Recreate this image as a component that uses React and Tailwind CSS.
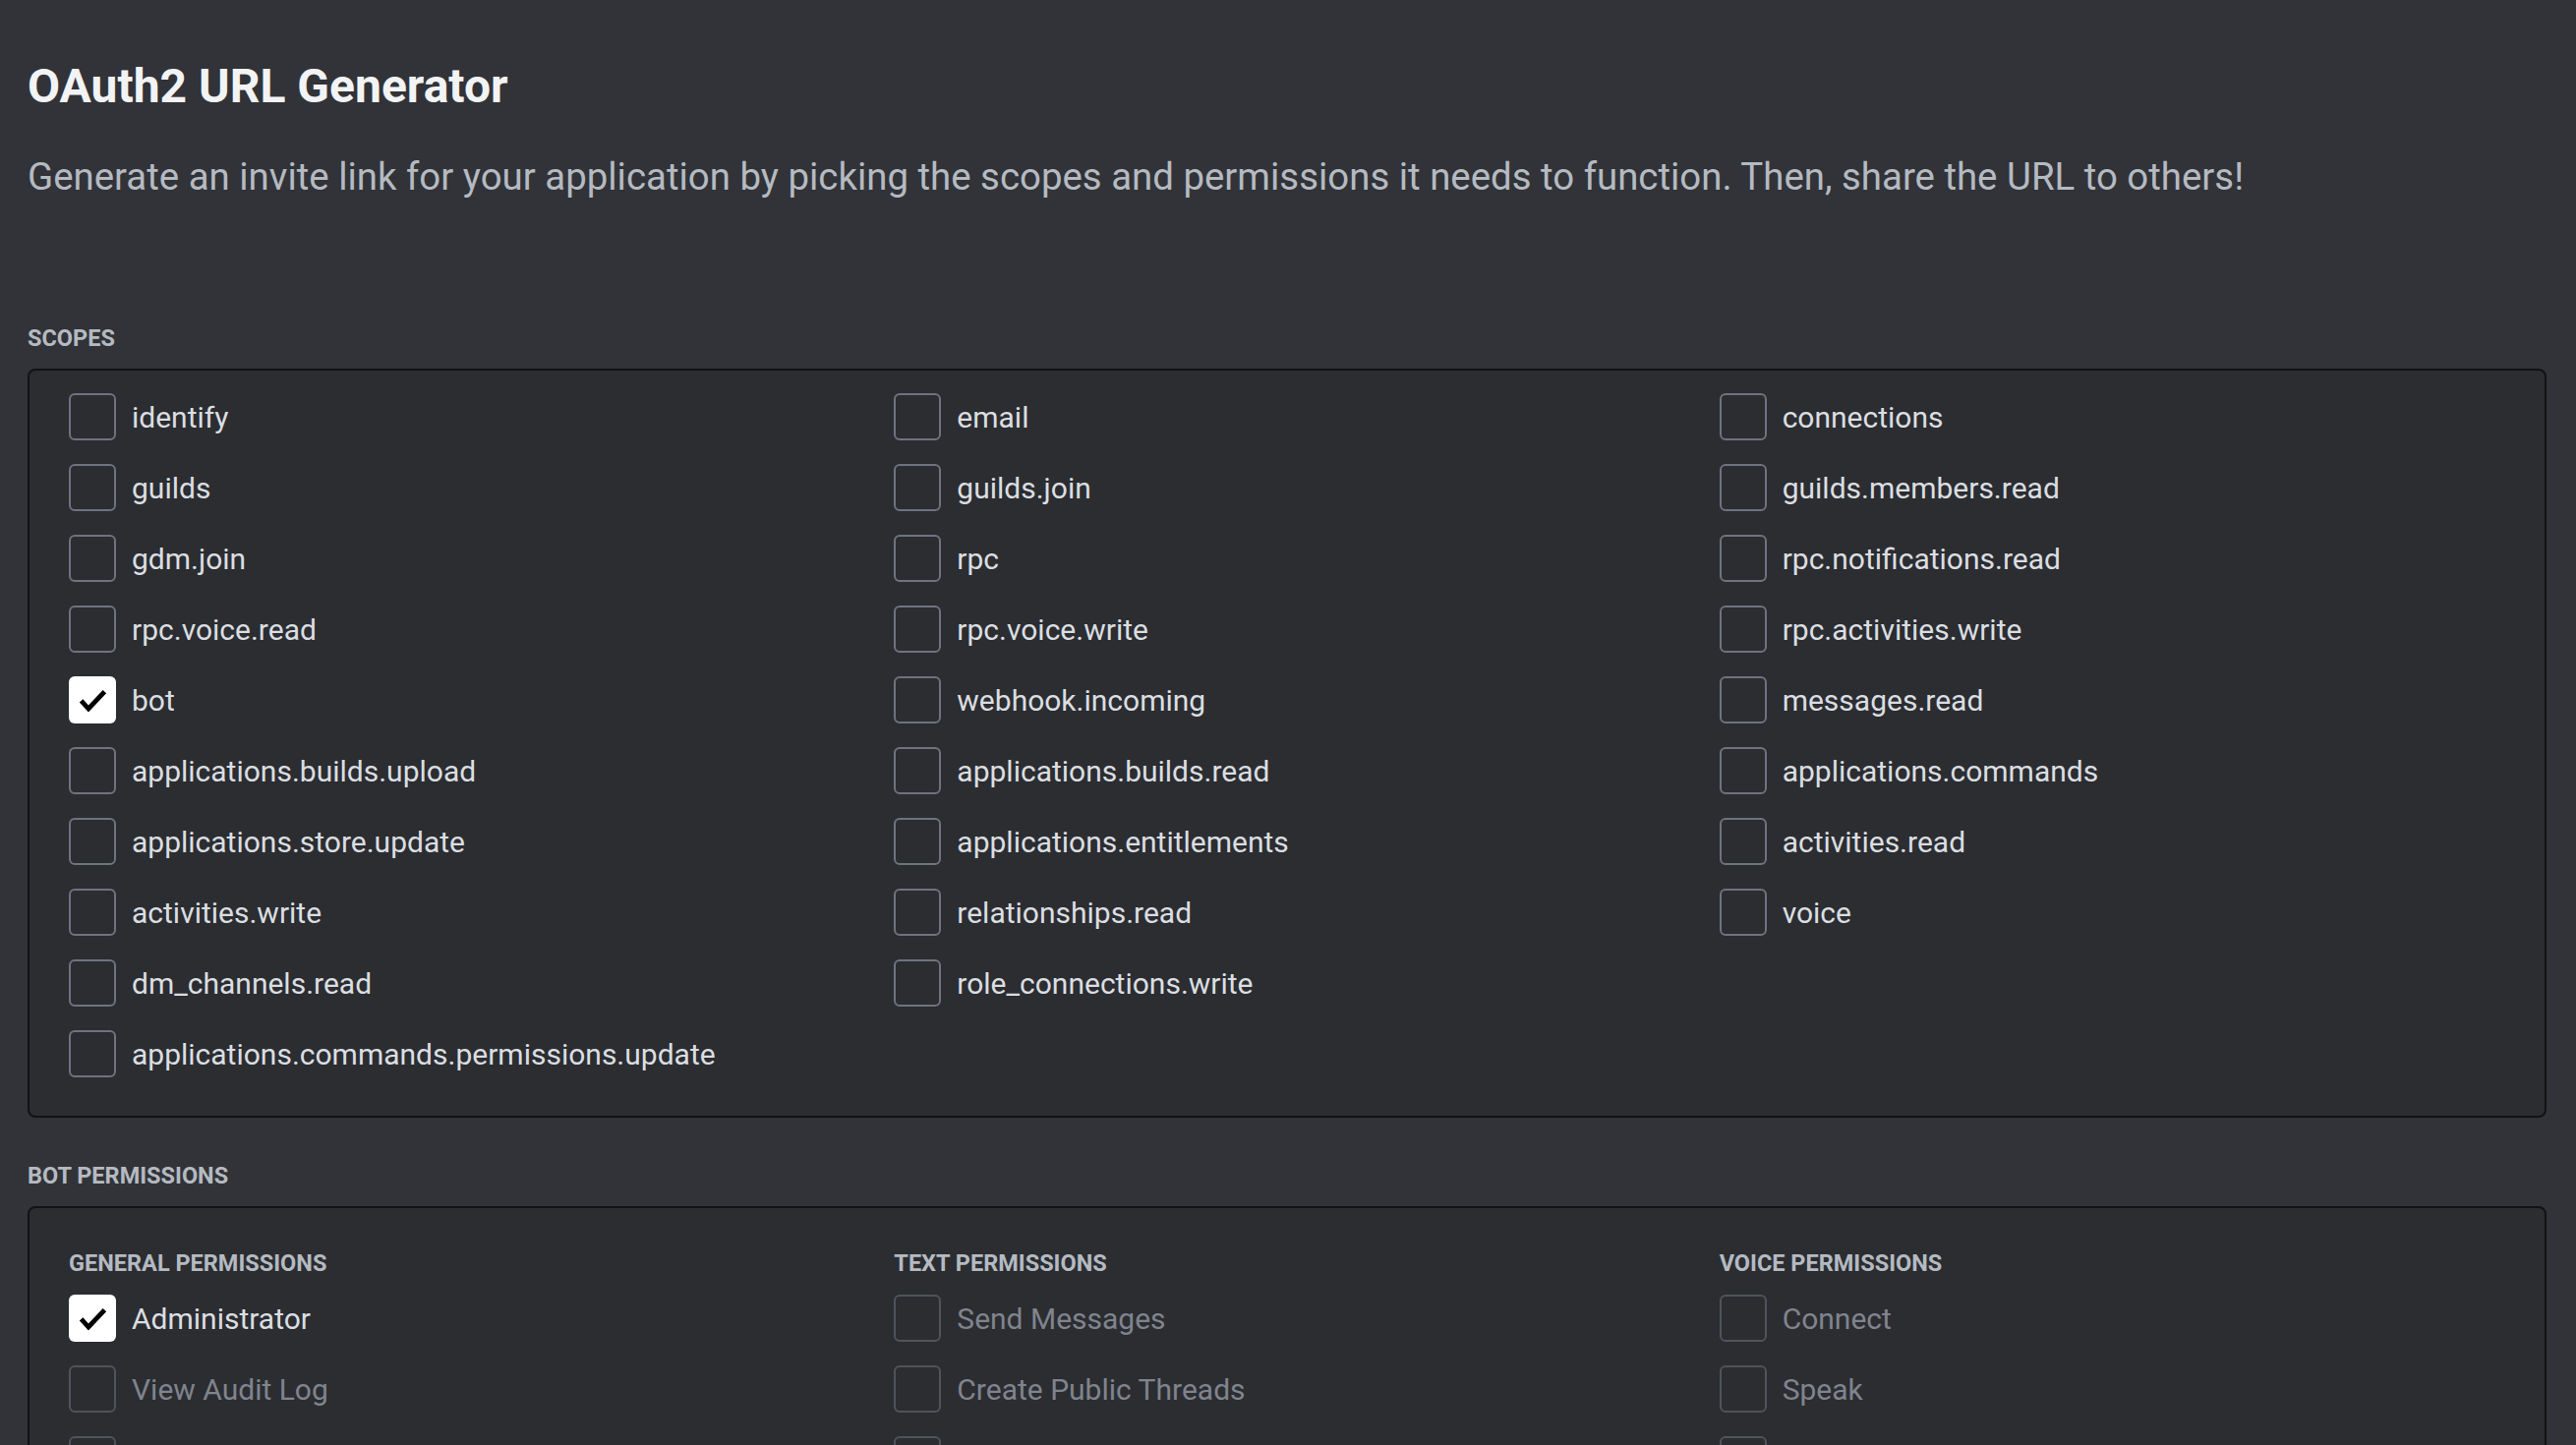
import React from 'react';

const scopes = [
  'identify', 'email', 'connections',
  'guilds', 'guilds.join', 'guilds.members.read',
  'gdm.join', 'rpc', 'rpc.notifications.read',
  'rpc.voice.read', 'rpc.voice.write', 'rpc.activities.write',
  'bot', 'webhook.incoming', 'messages.read',
  'applications.builds.upload', 'applications.builds.read', 'applications.commands',
  'applications.store.update', 'applications.entitlements', 'activities.read',
  'activities.write', 'relationships.read', 'voice',
  'dm_channels.read', 'role_connections.write', null,
  'applications.commands.permissions.update',
];

const permissionGroups = [
  {
    title: 'General Permissions',
    items: ['Administrator', 'View Audit Log', 'Manage Server', 'Manage Roles', 'Manage Channels', 'Kick Members'],
  },
  {
    title: 'Text Permissions',
    items: ['Send Messages', 'Create Public Threads', 'Create Private Threads', 'Send Messages in Threads', 'Send TTS Messages', 'Manage Messages'],
  },
  {
    title: 'Voice Permissions',
    items: ['Connect', 'Speak', 'Video', 'Use Activities', 'Use Soundboard', 'Mute Members'],
  },
];

const Checkbox = ({ checked, disabled }) => {
  if (checked) {
    return (
      <div className="w-12 h-12 shrink-0 rounded-[6px] bg-white flex items-center justify-center">
        <svg width="48" height="48" viewBox="0 0 24 24" fill="none">
          <path d="M6.3 12.4 L10 16.5 L18.2 7.8" stroke="#000" strokeWidth="2.4" strokeLinejoin="miter" />
        </svg>
      </div>
    );
  }
  return (
    <div className={`w-12 h-12 shrink-0 rounded-[6px] border-2 ${disabled ? 'border-[#4e535c]' : 'border-[#6d7380]'}`} />
  );
};

const Option = ({ label, checked, disabled }) => (
  <div className="flex items-center gap-4 h-12">
    <Checkbox checked={checked} disabled={disabled} />
    <span className={`text-[30px] leading-[48px] pt-[2px] whitespace-nowrap ${disabled ? 'text-[#80848e]' : 'text-[#dbdee1]'}`}>{label}</span>
  </div>
);

const SectionLabel = ({ children }) => (
  <h2 className="text-[23.5px] leading-8 font-bold uppercase text-[#b5bac1] mb-[15px]">{children}</h2>
);

export default function App() {
  return (
    <div className="h-[1470px] overflow-hidden bg-[#313338] font-[Roboto,sans-serif] pl-[28px] pr-[30px] pt-[60px]">
      {/* Header */}
      <h1 className="text-[48px] leading-[56px] font-bold text-[#f2f3f5]">OAuth2 URL Generator</h1>
      <p className="mt-[40px] text-[38.4px] leading-[48px] text-[#b5bac1] whitespace-nowrap">
        Generate an invite link for your application by picking the scopes and permissions it needs to function. Then, share the URL to others!
      </p>

      {/* Scopes */}
      <div className="mt-[124px]">
        <SectionLabel>Scopes</SectionLabel>
        <div className="bg-[#2b2d31] border-2 border-[#111214] rounded-[8px] pl-[40px] pt-[23px] pb-[39px]">
          <div className="grid grid-cols-3 gap-y-6">
            {scopes.map((s, i) =>
              s ? <Option key={i} label={s} checked={s === 'bot'} /> : <div key={i} />
            )}
          </div>
        </div>
      </div>

      {/* Bot permissions */}
      <div className="mt-[43px]">
        <SectionLabel>Bot Permissions</SectionLabel>
        <div className="bg-[#2b2d31] border-2 border-[#111214] rounded-[8px] pl-[40px] pt-[40px] pb-[39px]">
          <div className="grid grid-cols-3">
            {permissionGroups.map(group => (
              <div key={group.title} className="flex flex-col">
                <h3 className="text-[23.5px] leading-8 font-bold uppercase text-[#b5bac1] mb-4">{group.title}</h3>
                <div className="flex flex-col gap-6">
                  {group.items.map(item => (
                    <Option
                      key={item}
                      label={item}
                      checked={item === 'Administrator'}
                      disabled={item !== 'Administrator'}
                    />
                  ))}
                </div>
              </div>
            ))}
          </div>
        </div>
      </div>
    </div>
  );
}
